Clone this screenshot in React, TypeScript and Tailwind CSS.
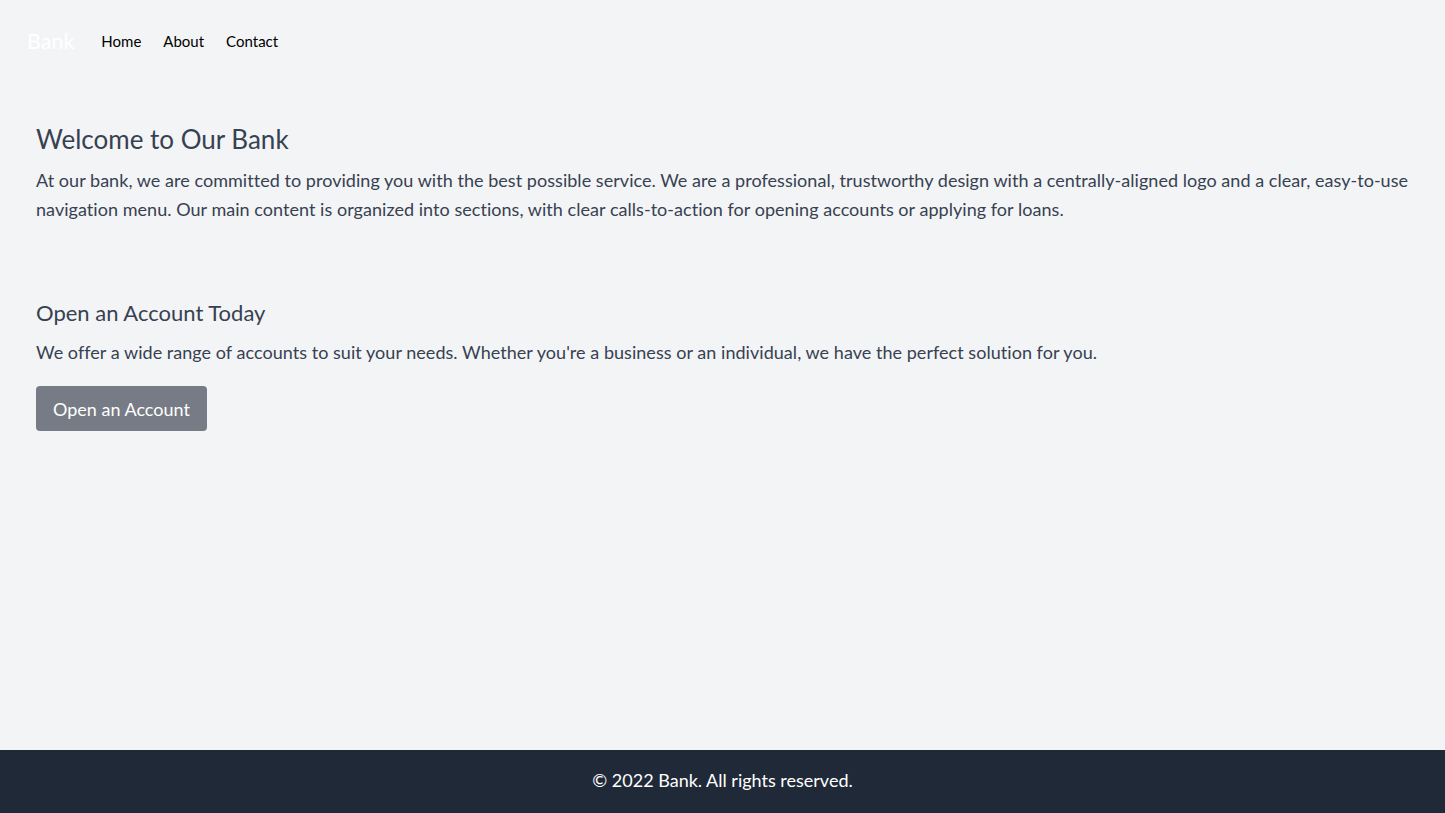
export default function App() {
  return (
    <div className="flex min-h-screen flex-col bg-[#f3f4f6] font-['Lato',sans-serif] text-[#374151]">
      <header className="flex items-center px-[27px] pt-[25px] pb-[27px]">
        <a href="#" className="text-[21.5px] text-white">Bank</a>
        <nav className="ml-[27px] flex gap-[22px] text-[15px] text-black">
          <a href="#">Home</a>
          <a href="#">About</a>
          <a href="#">Contact</a>
        </nav>
      </header>

      <main className="flex-1 px-9">
        <section className="pt-[37px] pb-[46px]">
          <h1 className="text-[26px] leading-[36px]">Welcome to Our Bank</h1>
          <p className="mt-[9px] text-lg leading-[29px] tracking-[0.04px]">
            At our bank, we are committed to providing you with the best possible service. We are a professional, trustworthy design with a centrally-aligned logo and a clear, easy-to-use navigation menu. Our main content is organized into sections, with clear calls-to-action for opening accounts or applying for loans.
          </p>
        </section>

        <section className="pt-[28px]">
          <h2 className="text-[22px] leading-[30px]">Open an Account Today</h2>
          <p className="mt-[10px] text-lg leading-[29px] tracking-[0.04px]">
            We offer a wide range of accounts to suit your needs. Whether you're a business or an individual, we have the perfect solution for you.
          </p>
          <button className="mt-[19px] h-[45px] rounded bg-[#767b85] px-[17px] text-lg text-white">
            Open an Account
          </button>
        </section>
      </main>

      <footer className="flex h-[63px] items-center justify-center bg-[#1f2937] pb-1 text-lg text-white">
        © 2022 Bank. All rights reserved.
      </footer>
    </div>
  );
}
